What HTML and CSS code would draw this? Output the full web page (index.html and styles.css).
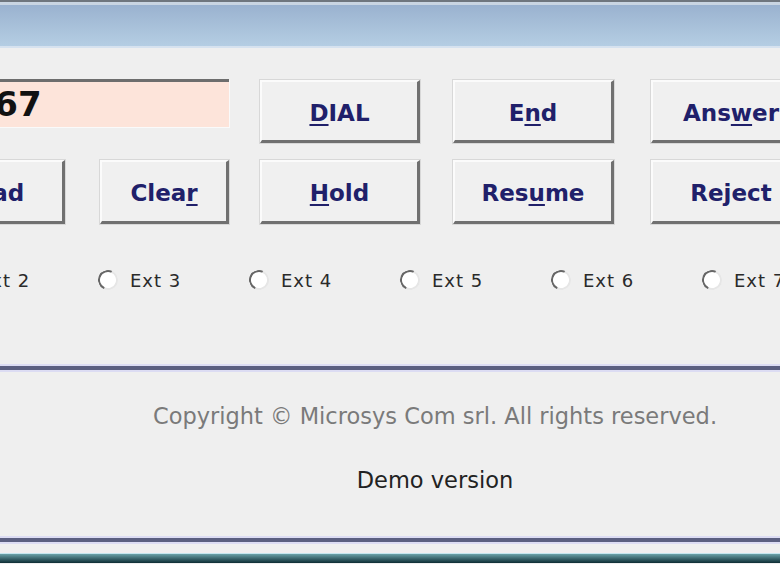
FILE: index.html
```html
<!DOCTYPE html>
<html lang="en">
<head>
    <meta charset="UTF-8">
    <title>Phone Control - Demo</title>
    <link rel="stylesheet" href="styles.css">
</head>
<body>

    <div class="window">
        <div class="titlebar"></div>

        <div class="panel">
            <!-- Number field and call buttons -->
            <div class="keys">
                <div class="number">4567</div>
                <button class="key dial"><u>D</u>IAL</button>
                <button class="key end">E<u>n</u>d</button>
                <button class="key answer">Ans<u>w</u>er</button>
                <button class="key pad"><u>P</u>ad</button>
                <button class="key clear">Clea<u>r</u></button>
                <button class="key hold"><u>H</u>old</button>
                <button class="key resume">Res<u>u</u>me</button>
                <button class="key reject">Reject</button>
            </div>

            <!-- Extension selector -->
            <div class="extensions">
                <label class="ext"><span class="radio"></span>Ext 1</label>
                <label class="ext"><span class="radio"></span>Ext 2</label>
                <label class="ext"><span class="radio"></span>Ext 3</label>
                <label class="ext"><span class="radio"></span>Ext 4</label>
                <label class="ext"><span class="radio"></span>Ext 5</label>
                <label class="ext"><span class="radio"></span>Ext 6</label>
                <label class="ext"><span class="radio"></span>Ext 7</label>
                <label class="ext"><span class="radio"></span>Ext 8</label>
            </div>
        </div>

        <div class="divider"></div>

        <div class="about">
            <div class="copyright">Copyright &copy; Microsys Com srl. All rights reserved.</div>
            <div class="demo">Demo version</div>
        </div>

        <div class="divider"></div>

        <div class="taskbar"></div>
    </div>

</body>
</html>
```

FILE: styles.css
```css
html, body {
    margin: 0;
    padding: 0;
    overflow: hidden;
    height: 564px;
    background-color: #efefef;
}
body {
    font-family: "DejaVu Sans", Verdana, sans-serif;
}
.window {
    width: 998px;
    margin-left: -64px;
}
/* Window caption */
.titlebar {
    height: 42px;
    border-top: 2px solid #6f767e;
    box-shadow: inset 0 3px 0 #c9d5e2, inset 0 -2px 0 #d6e2ef;
    background: linear-gradient(#98b0ce, #b6cfe4);
    padding-bottom: 4px;
}
.panel {
    padding-top: 32px;
}
/* Buttons grid */
.keys {
    display: grid;
    grid-template-columns: 129px 35px 129px 31px 160px 33px 161px 37px 161px;
    grid-template-rows: 63px 64px;
    row-gap: 17px;
    grid-template-areas:
        "num num num . dial . end . ans"
        "pad . clr . hold . res . rej";
}
.number {
    grid-area: num;
    align-self: start;
    margin-top: -1px;
    height: 45px;
    padding-left: 8px;
    background-color: #fde4da;
    border-top: 3px solid #6d6d6d;
    border-left: 3px solid #6d6d6d;
    box-shadow: 1px 1px 0 #fafafa;
    font-size: 34px;
    font-weight: bold;
    line-height: 45px;
    color: #111;
    overflow: hidden;
}
.key {
    font-family: "DejaVu Sans", Verdana, sans-serif;
    font-size: 23px;
    font-weight: bold;
    color: #20206a;
    background-color: #f0f0f0;
    border-style: solid;
    border-width: 2px 3px 3px 2px;
    border-color: #fbfbfb #707070 #707070 #fbfbfb;
    box-shadow: 0 0 0 1px #d8d8d8;
    padding: 3px 0 0 0;
    margin: 0;
    cursor: pointer;
}
.key u {
    text-decoration-thickness: 2px;
    text-underline-offset: 3px;
}
.dial { grid-area: dial; }
.end { grid-area: end; }
.answer { grid-area: ans; }
.pad { grid-area: pad; }
.clear { grid-area: clr; }
.hold { grid-area: hold; }
.resume { grid-area: res; }
.reject { grid-area: rej; }
/* Extension radio buttons */
.extensions {
    display: flex;
    margin-top: 45px;
    margin-left: -140px;
    height: 22px;
    align-items: center;
}
.ext {
    flex: 0 0 151px;
    display: flex;
    align-items: center;
    font-size: 18px;
    letter-spacing: 1px;
    color: #2a2a2a;
}
.radio {
    width: 16px;
    height: 16px;
    margin-right: 12px;
    border-radius: 50%;
    background-color: #fff;
    border: 2px solid;
    border-color: #666 #e6e6e6 #e6e6e6 #666;
    transform: rotate(-20deg);
}
/* Separator lines */
.divider {
    height: 4px;
    background-color: #5b5f80;
    border-top: 2px solid #dcdcf3;
    border-bottom: 2px solid #dcdcf3;
}
.panel + .divider {
    margin-top: 73px;
}
.about {
    text-align: center;
    font-size: 22.5px;
    padding-top: 29px;
    padding-bottom: 41px;
}
.copyright {
    line-height: 30px;
    color: #7a7a7a;
}
.demo {
    margin-top: 34px;
    line-height: 30px;
    color: #222;
}
/* Bottom edge of the screen */
.taskbar {
    margin-top: 9px;
    height: 9px;
    border-top: 1px solid #c4e6ee;
    background: linear-gradient(#6aa2a8, #0d2d34);
}
```
